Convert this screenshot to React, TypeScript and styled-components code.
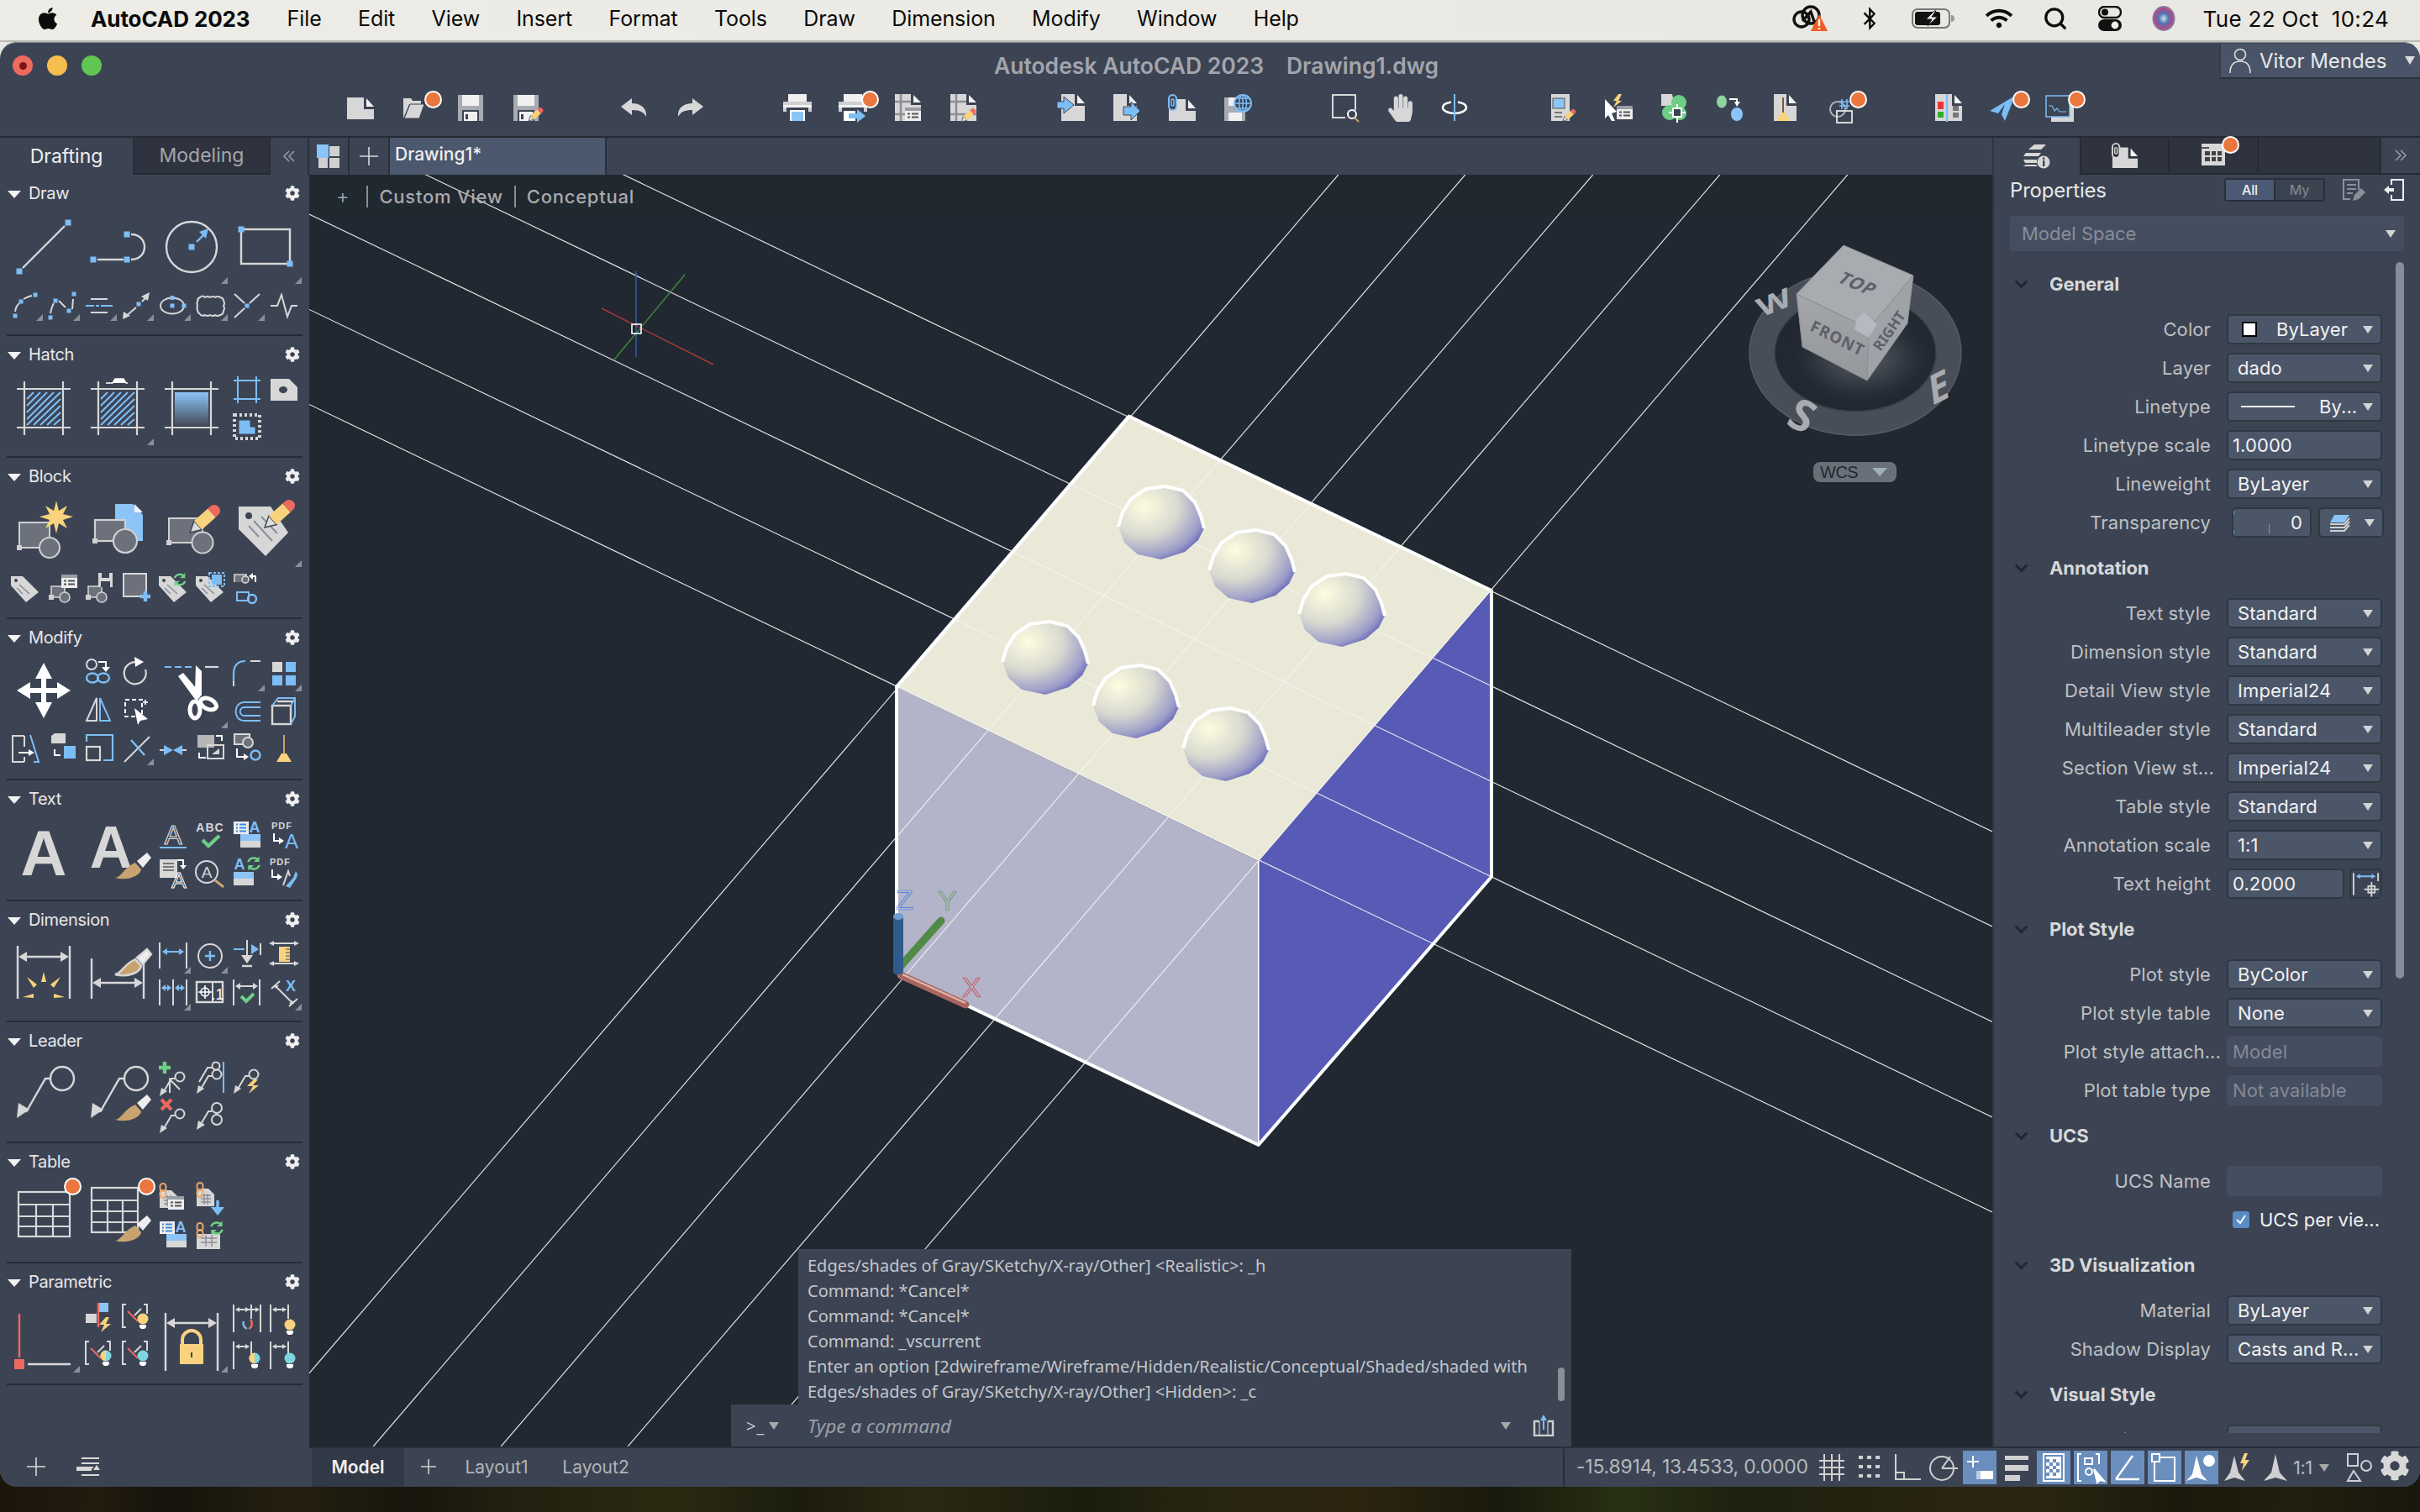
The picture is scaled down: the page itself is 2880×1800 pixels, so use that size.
import React from 'react';
import styled, { createGlobalStyle } from 'styled-components';
import { FaApple, FaBluetoothB, FaCog, FaHandPaper, FaWifi } from 'react-icons/fa';
import { FiSearch } from 'react-icons/fi';

const G = '#d7d7d7', B = '#7dbdf5', Y = '#f9d27d', R = '#ee6a60', N = '#6fce86', K = '#3c4454', T = '#c9a36f', M = '#6c717c', C = '#7fd6e0';
const FONT = `Inter, "Noto Sans", "Liberation Sans", sans-serif`;

const Global = createGlobalStyle`
  html, body { margin: 0; padding: 0; width: 2880px; height: 1800px; overflow: hidden; background: #1b1610; }
  #root { width: 2880px; height: 1800px; }
  * { box-sizing: border-box; }
`;

/* ---------- icon fragments ---------- */
const sq = (x: number, y: number, c = B, s = 6) => <rect x={x - s / 2} y={y - s / 2} width={s} height={s} fill={c} />;
const pencil = (x: number, y: number, s = 1) => (
  <g transform={`translate(${x} ${y}) rotate(-42) scale(${s})`}>
    <path d="M0 0L13-7V7Z" fill="#ddd" stroke={K} strokeWidth="1.5" />
    <rect x="13" y="-7" width="22" height="14" fill={Y} />
    <path d="M35-7h4a7 7 0 0 1 0 14h-4Z" fill={R} />
  </g>
);
const brush = (x: number, y: number, s = 1) => (
  <g transform={`translate(${x} ${y}) scale(${s})`}>
    <path d="M0 0C8-1 10-12 24-18L31-10C30-2 14 4 0 0Z" fill={T} />
    <path d="M26-20L38-30L43-24L33-12Z" fill="#eee" />
  </g>
);
const block = (x: number, y: number, w: number, h: number, r: number, sw = 2) => (
  <g>
    <rect x={x} y={y} width={w} height={h} fill={M} stroke="#d0d0d0" strokeWidth={sw} />
    <circle cx={x + w} cy={y + h} r={r} fill={M} stroke="#d0d0d0" strokeWidth={sw} />
    <rect x={x - 3} y={y + h - 3} width={6} height={6} fill="#d0d0d0" />
  </g>
);
const tag = (
  <g>
    <path d="M5 9L19 9L38 28L23 40L5 20Z" fill={G} />
    <circle cx="11" cy="14" r="2" fill={K} />
    <path d="M15 19L27 30M12 23L19 30" stroke="#8a8f98" strokeWidth="1.6" />
  </g>
);
const sync = (x: number, y: number, s = 1) => (
  <g transform={`translate(${x} ${y}) scale(${s})`} fill="none" stroke={N} strokeWidth="2.6">
    <path d="M-7-2A7.5 7.5 0 0 1 6-4" />
    <path d="M7 2A7.5 7.5 0 0 1-6 4" />
    <path d="M7-9V-2H0" fill={N} stroke="none" />
    <path d="M-7 9V2H0" fill={N} stroke="none" />
  </g>
);
const chain = (x: number, y: number) => (
  <g transform={`translate(${x} ${y})`} fill="none" stroke="#eda66b" strokeWidth="2">
    <rect x="-3.5" y="-9" width="7" height="9" rx="3.5" />
    <rect x="-3.5" y="-1" width="7" height="9" rx="3.5" />
  </g>
);
const tableMini = (x: number, y: number) => (
  <g>
    <path d={`M${x} ${y}h14l7 7v14H${x}Z`} fill={G} />
    <path d={`M${x + 5} ${y + 8}h12M${x + 5} ${y + 12}h12M${x + 5} ${y + 16}h12M${x + 9} ${y + 6}v13M${x + 13} ${y + 6}v13`} stroke="#8a8f98" strokeWidth="1.4" />
  </g>
);
const listDoc = (x: number, y: number) => (
  <g>
    <rect x={x} y={y} width="19" height="16" fill="#eee" />
    <rect x={x} y={y} width="19" height="4" fill="#9a9da3" />
    <path d={`M${x + 3} ${y + 7.5}h3M${x + 8} ${y + 7.5}h8M${x + 3} ${y + 11.5}h3M${x + 8} ${y + 11.5}h8`} stroke="#555" strokeWidth="1.8" />
  </g>
);
const listA = (
  <g>
    <rect x="6" y="5" width="18" height="15" fill="#eee" />
    <path d="M9 8.5h2M13 8.5h8M9 12.5h2M13 12.5h8M9 16.5h2M13 16.5h8" stroke="#3a8be0" strokeWidth="2" />
    <rect x="14" y="20" width="24" height="8" fill="#8cc4f7" />
    <rect x="14" y="28" width="24" height="8" fill={G} />
    <text x="31" y="18" fontFamily="Liberation Sans" fontWeight="700" fontSize="18" textAnchor="middle" fill={B}>A</text>
  </g>
);
const bulb = (x: number, y: number, c: string, half = false) => (
  <g>
    <circle cx={x} cy={y} r="6.5" fill={half ? C : c} />
    {half && <path d={`M${x} ${y - 6.5}A6.5 6.5 0 0 0 ${x} ${y + 6.5}Z`} fill={Y} />}
    <path d={`M${x - 4} ${y + 7}h8v3l-2 2h-4l-2-2Z`} fill="#fff" />
  </g>
);
const conBracket = (
  <g fill="none" stroke={G} strokeWidth="2">
    <path d="M10 5H6V32H10" />
    <path d="M31 5H35V16" />
    <path d="M20 18L28 10" />
    <path d="M12 13L24 25" stroke={R} />
  </g>
);
const dimTop = (
  <g fill="none" stroke={G} strokeWidth="2">
    <path d="M6 5V38M27 5V22" />
    <path d="M9 11H24" />
    <path d="M8 11l5-3v6ZM25 11l-5-3v6Z" fill={G} stroke="none" />
  </g>
);
const gridHatch = (extra?: React.ReactNode) => (
  <g>
    <path d="M12 19H76M12 65H76M21 10V74M67 10V74" stroke={G} strokeWidth="2.2" fill="none" />
    {extra}
  </g>
);
const hatchFill = (
  <g stroke={B} strokeWidth="2.2">
    {[0, 8, 16, 24, 32, 40, 48, 56, 64, 72].map((o) => (
      <line key={o} x1={Math.max(24, 24 + o - 40)} y1={Math.min(62, 23 + o)} x2={Math.min(64, 24 + o)} y2={Math.max(23, 23 + o - 40)} />
    ))}
  </g>
);
const leaderBase = (
  <g fill="none" stroke={G} strokeWidth="2.4">
    <circle cx="66" cy="23" r="14" />
    <path d="M52 23H46L23 63" />
    <path d="M12 70L14 52L27 60Z" fill={G} stroke="none" />
  </g>
);
const minLeader = (y = 0) => (
  <g fill="none" stroke={G} strokeWidth="2" transform={`translate(0 ${y})`}>
    <path d="M10 37L20 20H24" />
    <path d="M6 41L8 31L15 35Z" fill={G} stroke="none" />
    <circle cx="30" cy="18" r="5.5" />
  </g>
);

const panelIcons: Record<string, React.ReactNode> = {
  line: <g><path d="M19 67L69 17" stroke={G} strokeWidth="2.4" />{sq(15, 71, B, 7)}{sq(73, 13, B, 7)}</g>,
  pline: <g fill="none"><path d="M20 57H51" stroke={G} strokeWidth="2.4" /><path d="M60 27C72 27 76 36 76 42S72 57 60 57" stroke={G} strokeWidth="2.4" />{sq(15, 57, B, 7)}{sq(55, 57, B, 7)}{sq(55, 27, B, 7)}</g>,
  circle: <g><circle cx="44" cy="42" r="30" fill="none" stroke={G} strokeWidth="2.4" />{sq(44, 42, B, 7)}<path d="M50 36L60 26" stroke={B} strokeWidth="2.4" /><path d="M64 20L61 32L53 24Z" fill={B} /></g>,
  rect: <g><rect x="15" y="21" width="58" height="41" fill="none" stroke={G} strokeWidth="2.4" />{sq(15, 21, B, 7)}{sq(73, 62, B, 7)}</g>,
  arc: <g><path d="M10 31Q11 24 15 21M20 16Q25 13 30 12" fill="none" stroke={G} strokeWidth="2" />{sq(10, 36, B, 5)}{sq(17, 19, B, 5)}{sq(34, 11, B, 5)}</g>,
  spline: <g><path d="M8 33Q10 24 12 21M18 18L26 26M34 28L35 16" fill="none" stroke={G} strokeWidth="2" />{sq(8, 38, B, 5)}{sq(14, 18, B, 5)}{sq(30, 30, B, 5)}{sq(36, 10, B, 5)}</g>,
  mline: <g><path d="M12 16H32M12 32H32" stroke={G} strokeWidth="2" /><path d="M6 24H38" stroke={B} strokeWidth="2" strokeDasharray="10 2 4 2 20 0" /></g>,
  xline2: <g><path d="M8 38L22 26M29 19L36 12" stroke={G} strokeWidth="2" />{sq(25, 22, B, 5)}<path d="M6 40L7 31L15 36Z" fill={G} /><path d="M38 8L36 18L28 13Z" fill={G} /></g>,
  ellipse: <g><ellipse cx="21" cy="24" rx="14" ry="9.5" fill="none" stroke={G} strokeWidth="2" />{sq(21, 24, B, 5)}{sq(21, 14.5, B, 5)}{sq(35, 24, B, 5)}</g>,
  cloud: <path d="M10 14q3-3 6 0q3-2 6 0q3-2 6 0q3-2 6 0q4 1 4 4q2 3 0 6q2 3 0 6q0 4-4 5q-3 2-6 0q-3 2-6 0q-3 2-6 0q-4 2-6-1q-3-2-3-5q-1-3 0-5q-1-3 0-5q0-4 3-5Z" fill="none" stroke={G} strokeWidth="2" />,
  xline: <g><path d="M7 10L19 21M37 10L25 21M7 38L19 27" stroke={G} strokeWidth="2" />{sq(22, 24, B, 5)}</g>,
  wave: <path d="M6 24H14L19 11L26 37L31 24H38" fill="none" stroke={G} strokeWidth="2" />,
  hatch: gridHatch(hatchFill),
  hatch2: gridHatch(<g>{hatchFill}<path d="M20 9H28L31 4H41L44 9H46" transform="translate(10 3)" fill="#fff" stroke="#fff" strokeWidth="1.5" /></g>),
  gradient: <g><defs><linearGradient id="hg" x1="0" y1="0" x2="0" y2="1"><stop offset="0" stopColor="#8cc4f7" /><stop offset="1" stopColor="#474f5d" /></linearGradient></defs>{gridHatch(<rect x="24" y="23" width="40" height="39" fill="url(#hg)" />)}</g>,
  crop: <path d="M6 9H38M6 31H38M11 4V36M33 4V36" stroke={B} strokeWidth="2" fill="none" />,
  hole: <g><path d="M6 7H28L38 17V33H6Z" fill={G} /><ellipse cx="21" cy="20" rx="5" ry="4" fill={K} /></g>,
  boundary: <g><rect x="7" y="6" width="30" height="28" fill="none" stroke={G} strokeWidth="4" strokeDasharray="3 3" /><path d="M12 12H26V20H32V29H12Z" fill={B} stroke={K} strokeWidth="1" /></g>,
  blkNew: <g>{block(15, 33, 36, 30, 12)}<path d="M59 7L62 19L72 13L67 23L79 26L67 30L72 40L62 34L59 46L56 34L46 40L51 30L39 26L51 23L46 13L56 19Z" fill={Y} /></g>,
  blkDoc: <g><path d="M41 11H62L74 24V55H41Z" fill="#8cc4f7" /><path d="M64 11L74 21H64Z" fill="#eef" />{block(17, 30, 36, 25, 14, 2.2)}</g>,
  blkEdit: <g>{block(17, 28, 40, 29, 12.5)}{pencil(42, 45)}</g>,
  attEdit: <g><path d="M12 14H50L71 45L44 73L12 41Z" fill={G} /><circle cx="24" cy="25" r="4" fill={K} /><path d="M30 31L52 55M24 37L36 50M39 26L58 46" stroke="#8a8f98" strokeWidth="2" />{pencil(43, 39)}</g>,
  tag: tag,
  blkList: <g>{block(9, 21, 16, 13, 6, 1.6)}{listDoc(21, 7)}</g>,
  blkSave: <g>{block(9, 21, 16, 13, 6, 1.6)}<rect x="21" y="5" width="17" height="17" fill={G} /><rect x="25" y="5" width="9" height="6" fill={K} /><rect x="24" y="15" width="11" height="7" fill={K} /></g>,
  blkPlus: <g><rect x="7" y="6" width="27" height="27" fill={M} stroke={G} strokeWidth="2" /><path d="M33 27V39M27 33H39" stroke={B} strokeWidth="4.4" /></g>,
  tagSync: <g>{tag}{sync(30, 13, .9)}</g>,
  tagBlue: <g>{tag}<rect x="24" y="7" width="12" height="12" fill={B} /><rect x="21" y="5" width="18" height="16" fill="none" stroke={B} strokeWidth="2" strokeDasharray="3 2" /></g>,
  blkSwap: <g><path d="M7 16V7H21V16" fill={M} stroke={G} strokeWidth="1.6" /><circle cx="20" cy="13" r="4" fill={M} stroke={G} strokeWidth="1.6" /><path d="M32 16V9H27" fill="none" stroke="#fff" strokeWidth="2" /><path d="M29 5V13L24 9Z" fill="#fff" /><rect x="10" y="28" width="14" height="10" fill={K} stroke={B} strokeWidth="2" /><circle cx="28" cy="36" r="5" fill="none" stroke={B} strokeWidth="2.4" /></g>,
  move: <path d="M44 8L54 27H47V38H60V31L76 41L60 51V44H47V55H54L44 74L34 55H41V44H28V51L12 41L28 31V38H41V27H34Z" fill="#fff" />,
  copy: <g><circle cx="13" cy="10" r="6" fill="none" stroke={G} strokeWidth="2" /><path d="M21 7H30V14" fill="none" stroke="#fff" strokeWidth="2" /><path d="M25 13H35L30 19Z" fill="#fff" /><ellipse cx="14" cy="26" rx="7" ry="5.5" fill="none" stroke={B} strokeWidth="2.4" /><ellipse cx="27" cy="26" rx="7" ry="5.5" fill="none" stroke={B} strokeWidth="2.4" /></g>,
  rotate: <g><path d="M25 8A13 13 0 1 0 33 16" fill="none" stroke={G} strokeWidth="2.2" /><path d="M20 1L31 7L21 13Z" fill="#fff" /></g>,
  mirror: <g><path d="M19 6L7 33H19Z" fill="none" stroke={G} strokeWidth="2" /><path d="M23 6L35 33H23Z" fill="none" stroke={B} strokeWidth="2" /></g>,
  stretchSel: <g><rect x="9" y="8" width="20" height="20" fill="none" stroke="#fff" strokeWidth="2" strokeDasharray="5 3" /><path d="M20 18L36 31L27 33L24 38Z" fill="#fff" /><path d="M33 8V14M30 11H36" stroke="#fff" strokeWidth="1.6" /></g>,
  scissors: <g><path d="M12 13H46" stroke={B} strokeWidth="2.2" strokeDasharray="8 4" /><path d="M60 13H76" stroke={G} strokeWidth="2.2" /><path d="M28 24L34 20L56 46L50 54Z" fill="#fff" /><path d="M49 11L56 18L56 47L48 42Z" fill="#fff" /><ellipse cx="48" cy="64" rx="6" ry="10" fill="none" stroke="#fff" strokeWidth="5" /><ellipse cx="64" cy="57" rx="10" ry="6" transform="rotate(25 64 57)" fill="none" stroke="#fff" strokeWidth="5" /></g>,
  fillet: <g><path d="M6 32V22Q6 6 20 6" fill="none" stroke={B} strokeWidth="2.2" /><path d="M26 6H38" stroke={G} strokeWidth="2" /><path d="M6 36V30" stroke={G} strokeWidth="2" /></g>,
  array: <g><rect x="8" y="7" width="12" height="12" fill={G} /><rect x="24" y="7" width="12" height="12" fill={B} /><rect x="8" y="23" width="12" height="12" fill={B} /><rect x="24" y="23" width="12" height="12" fill={B} /></g>,
  offset: <g fill="none" stroke={B} strokeWidth="2"><path d="M38 11H19C5 11 5 33 19 33H38" /><path d="M38 17H19C12 17 12 27 19 27H38" /></g>,
  box3d: <g><rect x="8" y="15" width="22" height="22" fill="none" stroke={G} strokeWidth="2.4" /><path d="M8 15L15 6H35V28L30 37M30 15L35 6" fill="none" stroke={B} strokeWidth="2" /><path d="M14 10H32" stroke={G} strokeWidth="2.4" /></g>,
  stretch: <g><path d="M21 7H7V38H21" fill="none" stroke={G} strokeWidth="2" /><path d="M21 7V20M21 32V38" stroke={G} strokeWidth="2" /><path d="M28 6L38 38H32" fill="none" stroke={B} strokeWidth="2" /><path d="M14 27H28" stroke="#fff" strokeWidth="2" /><path d="M33 27L26 23V31Z" fill="#fff" /></g>,
  scale3: <g><path d="M9 7L13 4H26V16H9Z" fill={G} /><path d="M13 23V30H20" stroke="#fff" strokeWidth="2" fill="none" /><rect x="24" y="19" width="14" height="15" fill={B} /></g>,
  scale: <g><rect x="7" y="20" width="16" height="16" fill="none" stroke={G} strokeWidth="2.2" /><path d="M7 14V6H38V36H27" fill="none" stroke={B} strokeWidth="2.2" /></g>,
  trim: <g><path d="M8 38L38 8" stroke={G} strokeWidth="2" /><path d="M16 12L32 30" stroke={B} strokeWidth="2.4" /></g>,
  join: <g><path d="M6 24H14M30 24H38" stroke={G} strokeWidth="2" /><path d="M22 24L11 18V30ZM22 24L33 18V30Z" fill={B} /></g>,
  copyMode: <g><rect x="7" y="6" width="20" height="15" fill="#b7b7b7" /><path d="M29 7H36V13" fill="none" stroke="#fff" strokeWidth="2" /><rect x="19" y="18" width="19" height="16" fill="none" stroke={G} strokeWidth="2" /><path d="M24 29L33 29L33 22Z" fill={G} /><path d="M17 33H9V27" fill="none" stroke="#fff" strokeWidth="2" /></g>,
  swapBlk: <g><rect x="7" y="5" width="18" height="12" fill={M} stroke={G} strokeWidth="2" /><circle cx="23" cy="15" r="6" fill={M} stroke={G} strokeWidth="2" /><path d="M10 22V32H20" fill="none" stroke="#fff" strokeWidth="2" /><path d="M24 32L18 28V36Z" fill="#fff" /><circle cx="32" cy="30" r="5.5" fill="none" stroke={B} strokeWidth="2.4" /></g>,
  purge: <g><rect x="21" y="6" width="2" height="24" fill={T} /><path d="M13 38L19 28H25L31 38Z" fill={Y} /></g>,
  A: <text x="44" y="69" fontFamily="Liberation Sans" fontWeight="700" fontSize="76" textAnchor="middle" fill={G}>A</text>,
  Abrush: <g><text x="36" y="60" fontFamily="Liberation Sans" fontWeight="700" fontSize="70" textAnchor="middle" fill={G}>A</text>{brush(41, 72)}</g>,
  Aline: <g><text x="22" y="32" fontFamily="Liberation Sans" fontSize="31" textAnchor="middle" fill="none" stroke={G} strokeWidth="1.2">A</text><path d="M6 36H38" stroke={B} strokeWidth="2" /></g>,
  abc: <g><text x="22" y="17" fontFamily="Liberation Sans" fontWeight="700" fontSize="14" letterSpacing="1" textAnchor="middle" fill={G}>ABC</text><path d="M13 27L20 34L33 22" fill="none" stroke={N} strokeWidth="4.2" /></g>,
  listA: listA,
  pdfA: <g><text x="7" y="14" fontFamily="Liberation Sans" fontWeight="700" fontSize="11" letterSpacing="1" fill={G}>PDF</text><path d="M10 19V28H18" stroke="#fff" strokeWidth="2" fill="none" /><path d="M22 28L16 24V32Z" fill="#fff" /><text x="31" y="37" fontFamily="Liberation Sans" fontSize="24" textAnchor="middle" fill={B}>A</text></g>,
  docA: <g><rect x="6" y="6" width="21" height="22" fill={G} /><path d="M10 11H23M10 15H23M10 19H23" stroke="#777" strokeWidth="1.8" /><path d="M27 7H34V15" fill="none" stroke="#fff" strokeWidth="2" /><path d="M30 13H38L34 18Z" fill="#fff" /><text x="29" y="40" fontFamily="Liberation Sans" fontSize="26" textAnchor="middle" fill="none" stroke="#fff" strokeWidth="1">A</text></g>,
  findA: <g><circle cx="18" cy="21" r="13" fill="none" stroke={G} strokeWidth="2" /><text x="18" y="28" fontFamily="Liberation Sans" fontSize="19" textAnchor="middle" fill={G}>A</text><path d="M28 31L38 39" stroke={T} strokeWidth="3" /></g>,
  Async: <g><text x="13" y="18" fontFamily="Liberation Sans" fontWeight="700" fontSize="18" textAnchor="middle" fill={B}>A</text>{sync(30, 11, .95)}<rect x="6" y="21" width="24" height="8" fill="#8cc4f7" /><rect x="6" y="29" width="24" height="8" fill={G} /></g>,
  pdfW: <g><text x="5" y="13" fontFamily="Liberation Sans" fontWeight="700" fontSize="11" letterSpacing="1" fill={G}>PDF</text><path d="M8 18V27H16" stroke="#fff" strokeWidth="2" fill="none" /><path d="M20 27L14 23V31Z" fill="#fff" /><path d="M21 37L27 20L29 26" fill="none" stroke={G} strokeWidth="2" /><path d="M24 38L33 28L36 20L38 24L37 28L29 40Z" fill={B} /></g>,
  dimSmart: <g fill="none" stroke={G} strokeWidth="2.4"><path d="M13 9V72M75 9V72" /><path d="M18 22H70" /><path d="M14 22L24 16V28ZM74 22L64 16V28Z" fill={G} stroke="none" /><g fill={Y} stroke="none"><path d="M44 40L47 52H41Z" /><path d="M24 46L36 55L32 59Z" /><path d="M64 46L52 55L56 59Z" /><path d="M19 70L32 66V71Z" /><path d="M69 70L56 66V71Z" /></g></g>,
  dimBrush: <g fill="none" stroke={G} strokeWidth="2.4"><path d="M13 24V72M75 24V72" /><path d="M18 53H70" /><path d="M14 53L24 47V59ZM74 53L64 47V59Z" fill={G} stroke="none" />{brush(41, 43)}</g>,
  dimL: <g><path d="M6 5V36M38 5V36" stroke={G} strokeWidth="2" /><path d="M10 16H34" stroke={B} strokeWidth="2" /><path d="M9 16L15 12V20ZM35 16L29 12V20Z" fill={B} /></g>,
  dimC: <g><circle cx="22" cy="21" r="14" fill="none" stroke={G} strokeWidth="2" /><path d="M22 15V27M16 21H28" stroke={B} strokeWidth="2.4" /></g>,
  dimB: <g><path d="M6 13H19" stroke={B} strokeWidth="2" /><path d="M22 2V26" stroke={G} strokeWidth="2" /><path d="M38 6V20" stroke={G} strokeWidth="2" /><path d="M27 13H32" stroke={B} strokeWidth="2" /><path d="M36 13L27 7V19Z" fill={B} /><path d="M22 30L15 20H29Z" fill={G} /><path d="M16 33H28" stroke={G} strokeWidth="2.4" /></g>,
  ruler: <g><path d="M7 6H37M7 30H37" stroke={G} strokeWidth="2" /><path d="M4 6L10 3V9ZM40 6L34 3V9ZM4 30L10 27V33ZM40 30L34 27V33Z" fill={G} /><rect x="16" y="10" width="13" height="18" fill={Y} /><path d="M24 13H29M24 17H29M24 21H29M24 25H29" stroke={K} strokeWidth="1.2" /></g>,
  dimCont: <g><path d="M6 5V36M22 5V36M38 5V36" stroke={G} strokeWidth="2" /><path d="M10 15H18M26 15H34" stroke={B} strokeWidth="2" /><path d="M8 15L13 11V19ZM20 15L15 11V19ZM24 15L29 11V19ZM36 15L31 11V19Z" fill={B} /></g>,
  tol: <g><rect x="6" y="8" width="31" height="24" fill="none" stroke={G} strokeWidth="2.4" /><path d="M25 8V32" stroke={G} strokeWidth="2" /><circle cx="16" cy="20" r="5" fill="none" stroke="#fff" strokeWidth="1.6" /><path d="M16 12V28M8 20H24" stroke="#fff" strokeWidth="1.6" /><text x="31" y="29" fontFamily="Liberation Sans" fontSize="18" textAnchor="middle" fill="#fff">.1</text></g>,
  dimOk: <g><path d="M6 5V36M37 5V36" stroke={G} strokeWidth="2" /><path d="M10 13H33" stroke={G} strokeWidth="2" /><path d="M8 13L14 9V17ZM35 13L29 9V17Z" fill={G} /><path d="M15 25L21 31L30 22" fill="none" stroke={N} strokeWidth="4" /></g>,
  dimX: <g><path d="M7 16L17 7M28 37L38 28M12 13L32 33" stroke={G} strokeWidth="2" /><path d="M10 12h6l-4 4ZM34 34l-6 0 4-4Z" fill={G} /><text x="30" y="19" fontFamily="Liberation Sans" fontWeight="700" fontSize="18" textAnchor="middle" fill={B}>X</text></g>,
  leader: leaderBase,
  leaderBrush: <g>{leaderBase}{brush(41, 72)}</g>,
  ldAdd: <g>{minLeader(3)}<path d="M8 3V17M1 10H15" stroke={N} strokeWidth="4.4" transform="translate(4 0)" /><path d="M18 40V24L30 36" fill="none" stroke={G} strokeWidth="2" /></g>,
  ldAlign: <g>{minLeader(0)}<path d="M9 27L19 10H24" fill="none" stroke={G} strokeWidth="2" /><circle cx="29" cy="8" r="4.5" fill="none" stroke={G} strokeWidth="2" /><path d="M38 3V40" stroke={B} strokeWidth="2" /></g>,
  ldBolt: <g>{minLeader(0)}<path d="M30 24L22 32H29L24 41L36 31H29L35 24Z" fill={Y} /></g>,
  ldRem: <g><path d="M8 4L20 16M20 4L8 16" stroke={R} strokeWidth="4" />{minLeader(3)}</g>,
  ldCol: <g><path d="M10 35L20 18H24" fill="none" stroke={G} strokeWidth="2" /><path d="M6 40L8 29L16 34Z" fill={G} /><circle cx="30" cy="14" r="6" fill="none" stroke={G} strokeWidth="2" /><circle cx="30" cy="28" r="6" fill="none" stroke={G} strokeWidth="2" /></g>,
  table: <g fill="none" stroke={G} strokeWidth="2.2"><rect x="14" y="14" width="61" height="53" /><path d="M14 29H75M14 43H75M14 55H75M35 29V67M55 29V67" /></g>,
  tableBrush: <g><g fill="none" stroke={G} strokeWidth="2.2"><rect x="13" y="9" width="55" height="53" /><path d="M13 24H68M13 37H68M13 50H68M32 24V62M50 24V62" /></g>{brush(41, 72)}</g>,
  tblLink: <g>{tableMini(6, 12)}{chain(10, 13)}{listDoc(16, 19)}</g>,
  tblDown: <g>{tableMini(6, 10)}{chain(10, 12)}<path d="M31 24V34" stroke={B} strokeWidth="3.4" /><path d="M23 32H39L31 42Z" fill={B} /></g>,
  tblSync: <g><path d="M6 20H34V38H6Z" fill={G} /><path d="M11 25H30M11 30H30M17 21V35M24 21V35" stroke="#8a8f98" strokeWidth="1.4" />{chain(10, 16)}{sync(30, 13, .95)}</g>,
  conCorner: <g><path d="M15 16V68" stroke={R} strokeWidth="2.4" /><rect x="9" y="70" width="12" height="12" fill={R} /><path d="M25 76H76" stroke={G} strokeWidth="2.4" /></g>,
  conFlag: <g><rect x="22" y="3" width="11" height="11" fill="#8cc4f7" /><path d="M21 3V32" stroke={R} strokeWidth="2.4" /><rect x="6" y="16" width="13" height="11" fill={G} /><path d="M30 20L22 29H28L24 38L36 28H30L34 20Z" fill={Y} /></g>,
  conY: <g>{conBracket}{bulb(30, 22, Y)}</g>,
  conH: <g>{conBracket}{bulb(30, 22, C, true)}</g>,
  conC: <g>{conBracket}{bulb(30, 22, C)}</g>,
  lock: <g fill="none" stroke={G} strokeWidth="2.4"><path d="M13 15V84M75 15V84" /><path d="M18 27H70" /><path d="M14 27L24 21V33ZM74 27L64 21V33Z" fill={G} stroke="none" /><path d="M33 52V47A11 11 0 0 1 55 47V52" stroke={Y} strokeWidth="4" /><rect x="30" y="52" width="28" height="24" rx="1" fill={Y} stroke="none" /><rect x="43" y="62" width="2" height="6" fill={K} stroke="none" /></g>,
  dimSync: <g>{dimTop}<path d="M38 5V38" stroke={G} strokeWidth="2" /><path d="M20 11H35" stroke={G} strokeWidth="2" /><path d="M37 11l-5-3v6Z" fill={G} /><path d="M18 25A7 7 0 0 0 22 34" fill="none" stroke={B} strokeWidth="2.4" /><path d="M26 23A7 7 0 0 1 24 34" fill="none" stroke={R} strokeWidth="2.4" /></g>,
  dimY: <g>{dimTop}{bulb(29, 29, Y)}</g>,
  dimH: <g>{dimTop}{bulb(31, 25, C, true)}</g>,
  dimCy: <g>{dimTop}{bulb(29, 25, C)}</g>,
};

type Tool = { i: string; c: number; r: number; big?: boolean; fly?: boolean; badge?: boolean };
const t = (i: string, c: number, r: number, fly = false): Tool => ({ i, c, r, fly });
const b = (i: string, c: number, r: number, fly = false, badge = false): Tool => ({ i, c, r, big: true, fly, badge });

const sections: { title: string; pad: number; tools: Tool[] }[] = [
  { title: 'Draw', pad: 14, tools: [b('line', 0, 0), b('pline', 2, 0), b('circle', 4, 0, true), b('rect', 6, 0, true),
    t('arc', 0, 2, true), t('spline', 1, 2, true), t('mline', 2, 2, true), t('xline2', 3, 2, true), t('ellipse', 4, 2, true), t('cloud', 5, 2, true), t('xline', 6, 2, true), t('wave', 7, 2)] },
  { title: 'Hatch', pad: 11, tools: [b('hatch', 0, 0), b('hatch2', 2, 0, true), b('gradient', 4, 0), t('crop', 6, 0), t('hole', 7, 0), t('boundary', 6, 1)] },
  { title: 'Block', pad: 14, tools: [b('blkNew', 0, 0), b('blkDoc', 2, 0), b('blkEdit', 4, 0), b('attEdit', 6, 0, true),
    t('tag', 0, 2), t('blkList', 1, 2), t('blkSave', 2, 2), t('blkPlus', 3, 2), t('tagSync', 4, 2), t('tagBlue', 5, 2), t('blkSwap', 6, 2)] },
  { title: 'Modify', pad: 14, tools: [b('move', 0, 0), t('copy', 2, 0), t('rotate', 3, 0), b('scissors', 4, 0, true), t('fillet', 6, 0, true), t('array', 7, 0, true), t('mirror', 2, 1), t('stretchSel', 3, 1), t('offset', 6, 1), t('box3d', 7, 1),
    t('stretch', 0, 2), t('scale3', 1, 2), t('scale', 2, 2), t('trim', 3, 2, true), t('join', 4, 2), t('copyMode', 5, 2), t('swapBlk', 6, 2), t('purge', 7, 2)] },
  { title: 'Text', pad: 10, tools: [b('A', 0, 0), b('Abrush', 2, 0), t('Aline', 4, 0), t('abc', 5, 0), t('listA', 6, 0), t('pdfA', 7, 0), t('docA', 4, 1), t('findA', 5, 1), t('Async', 6, 1), t('pdfW', 7, 1)] },
  { title: 'Dimension', pad: 10, tools: [b('dimSmart', 0, 0), b('dimBrush', 2, 0), t('dimL', 4, 0, true), t('dimC', 5, 0, true), t('dimB', 6, 0), t('ruler', 7, 0), t('dimCont', 4, 1, true), t('tol', 5, 1), t('dimOk', 6, 1), t('dimX', 7, 1, true)] },
  { title: 'Leader', pad: 10, tools: [b('leader', 0, 0), b('leaderBrush', 2, 0), t('ldAdd', 4, 0), t('ldAlign', 5, 0), t('ldBolt', 6, 0), t('ldRem', 4, 1), t('ldCol', 5, 1)] },
  { title: 'Table', pad: 9, tools: [b('table', 0, 0, false, true), b('tableBrush', 2, 0, false, true), t('tblLink', 4, 0), t('tblDown', 5, 0), t('listA', 4, 1), t('tblSync', 5, 1)] },
  { title: 'Parametric', pad: 11, tools: [b('conCorner', 0, 0, true), t('conFlag', 2, 0), t('conY', 3, 0), t('conH', 2, 1), t('conC', 3, 1), b('lock', 4, 0, true), t('dimSync', 6, 0), t('dimY', 7, 0), t('dimH', 6, 1), t('dimCy', 7, 1)] },
];

/* toolbar (34 x 32) */
const doc = (x: number, y: number, w: number, h: number) => (
  <g>
    <path d={`M${x} ${y}H${x + w - 12}V${y + 14}H${x + w}V${y + h}H${x}Z`} fill={G} />
    <path d={`M${x + w - 9} ${y + 1}L${x + w} ${y + 11}H${x + w - 9}Z`} fill="#f2f2f2" />
  </g>
);
const floppy = (
  <g>
    <path d="M1 1H31V32H1Z" fill="#a8abb1" />
    <rect x="6" y="1" width="20" height="13" fill="#f0f0f0" />
    <rect x="6" y="19" width="20" height="13" fill={K} />
    <rect x="8" y="21" width="16" height="11" fill="#f0f0f0" />
    <rect x="10" y="24" width="3" height="6" fill={K} />
  </g>
);
const printer = (
  <g>
    <rect x="6" y="0" width="22" height="10" fill="#f0f0f0" />
    <rect x="0" y="9" width="34" height="12" fill="#d0d0d0" />
    <rect x="0" y="13" width="34" height="3" fill="#f4f4f4" />
    <rect x="4" y="16" width="26" height="14" fill={K} />
  </g>
);
const sheet = (
  <g>
    <path d="M1 0H20V13H32V32H1Z" fill={G} />
    <path d="M23 1L32 10H23Z" fill="#f2f2f2" />
    <path d="M8 0V32M1 9H20M1 24H32" stroke="#8b8e95" strokeWidth="2.5" />
  </g>
);
const toolbar: { i: string; badge?: boolean; node: React.ReactNode }[][] = [
  [
    { i: 'new', node: doc(1, 4, 32, 26) },
    { i: 'open', badge: true, node: <g><path d="M2 5H11L13 8H23V12H9L2 29Z" fill={G} /><path d="M10 12H27L21 29H3Z" fill={G} stroke={K} strokeWidth="1" /></g> },
    { i: 'save', node: floppy },
    { i: 'saveas', node: <g>{floppy}{pencil(19, 32, .48)}</g> },
  ],
  [
    { i: 'undo', node: <path d="M1 15L14 5V11C24 11 32 16 31 27C28 21 23 19 14 19V25Z" fill={G} /> },
    { i: 'redo', node: <path d="M33 15L20 5V11C10 11 2 16 3 27C6 21 11 19 20 19V25Z" fill={G} /> },
  ],
  [
    { i: 'print', node: <g>{printer}<rect x="8" y="19" width="18" height="13" fill="#fff" /><rect x="10" y="21" width="14" height="11" fill="#8cc4f7" /></g> },
    { i: 'plot', badge: true, node: <g>{printer}<rect x="6" y="20" width="14" height="12" fill="#fff" /><path d="M12 23H22V18L32 26L22 34V29H12Z" fill={B} /></g> },
    { i: 'sheet', node: <g>{sheet}{listDoc(13, 16)}</g> },
    { i: 'sheetEdit', node: <g>{sheet}{pencil(14, 33, .48)}</g> },
  ],
  [
    { i: 'import', node: <g>{doc(5, 0, 28, 32)}<path d="M0 9H8V3L20 13L8 23V17H0Z" fill={B} stroke={K} strokeWidth="1" /></g> },
    { i: 'export', node: <g>{doc(1, 0, 28, 32)}<path d="M13 15H22V9L33 20L22 31V25H13Z" fill={B} stroke={K} strokeWidth="1" /></g> },
    { i: 'attach', node: <g>{doc(1, 6, 32, 26)}<rect x="1" y="1" width="9" height="18" rx="4.5" fill="#3c4454" stroke={B} strokeWidth="2" /><rect x="4" y="6" width="3" height="8" rx="1.5" fill="none" stroke={B} strokeWidth="1.5" /></g> },
    { i: 'web', node: <g><path d="M1 4H26V32H1Z" fill="#a8abb1" /><rect x="6" y="4" width="13" height="10" fill="#f0f0f0" /><rect x="6" y="22" width="16" height="10" fill="#f0f0f0" /><circle cx="23" cy="11" r="10" fill={K} stroke={B} strokeWidth="2" /><path d="M13 11H33M23 1V21M16 5H30M16 17H30" stroke={B} strokeWidth="1.5" /><ellipse cx="23" cy="11" rx="4.5" ry="10" fill="none" stroke={B} strokeWidth="1.5" /></g> },
  ],
  [
    { i: 'zoom', node: <g><path d="M17 28H2V1H29V19" fill="none" stroke={G} strokeWidth="2" /><circle cx="25" cy="24" r="5" fill="none" stroke="#fff" strokeWidth="2" /><path d="M28 28L33 33" stroke={T} strokeWidth="2" /></g> },
    { i: 'hand', node: <FaHandPaper x="0" y="0" size={33} color={G} /> },
    { i: 'orbit', node: <g><path d="M11 9.5C5 10.5 1 13 1 16C1 20 8 23 15 23S29 20 29 16C29 13 25 10.5 19 9.5" fill="none" stroke="#fff" strokeWidth="2.6" /><path d="M15 0V32" stroke={B} strokeWidth="2" /></g> },
  ],
  [
    { i: 'props', node: <g><path d="M2 0H24V32H2Z" fill={G} /><rect x="4" y="5" width="14" height="12" fill="#8cc4f7" stroke="#555" strokeWidth="1" /><path d="M6 22H15M6 27H15" stroke="#777" strokeWidth="2" />{pencil(16, 32, .42)}</g> },
    { i: 'quick', node: <g><path d="M0 6L14 21L8 23L12 32L8 32L4 25L0 29Z" fill="#fff" /><path d="M16 0L10 8H14L10 16L20 8H16L20 0Z" fill={Y} />{listDoc(14, 14)}</g> },
    { i: 'xref', node: <g><path d="M1 0H14L17 14H1Z" fill={G} /><circle cx="22" cy="10" r="9" fill={N} /><circle cx="11" cy="22" r="9" fill={N} /><circle cx="23" cy="23" r="8" fill={N} /><path d="M10 22H30M20 12V34" stroke="#fff" strokeWidth="2" /><rect x="15" y="17" width="10" height="10" fill={K} stroke="#fff" strokeWidth="2" /></g> },
    { i: 'match', node: <g><ellipse cx="7" cy="9" rx="6" ry="7.5" fill="#8fd3a0" /><ellipse cx="25" cy="24" rx="7" ry="8" fill="#8cc4f7" /><path d="M16 6H25V11" fill="none" stroke="#fff" strokeWidth="2" /><path d="M22 9H29L25 15Z" fill="#fff" /></g> },
    { i: 'purgeDoc', node: <g>{doc(3, 0, 27, 32)}<rect x="13" y="4" width="2" height="20" fill="#7a5b33" /><path d="M6 32L11 22H17L22 32Z" fill={Y} /></g> },
    { i: 'refs', badge: true, node: <g><circle cx="13" cy="18" r="9" fill="none" stroke="#b0b3b9" strokeWidth="2" /><rect x="12" y="20" width="18" height="14" fill="none" stroke={G} strokeWidth="2" /><path d="M18 6V18M24 6V18M15 9H27M15 14H27" stroke={B} strokeWidth="1.6" /></g> },
  ],
  [
    { i: 'compare', node: <g>{doc(1, 0, 32, 32)}<rect x="4" y="9" width="7" height="9" fill="#e33" /><rect x="4" y="21" width="7" height="7" fill="#3a3" /><rect x="22" y="14" width="7" height="6" fill="#777" /><rect x="22" y="22" width="7" height="6" fill="#777" /><path d="M15 0V33" stroke={B} strokeWidth="2.4" /></g> },
    { i: 'plane', badge: true, node: <path d="M0 20L30 2L18 32L14 24L18 12L10 23Z" fill={B} /> },
    { i: 'screen', badge: true, node: <g><rect x="7" y="9" width="27" height="24" fill={G} /><rect x="1" y="2" width="28" height="25" fill={K} stroke={B} strokeWidth="1.5" /><path d="M4 14L8 14L11 20L14 17L17 21L25 21" fill="none" stroke={B} strokeWidth="1.2" /></g> },
  ],
];

/* status bar icons (40 x 40) */
const statusIcons: { on?: boolean; node: React.ReactNode }[] = [
  { node: <path d="M11 4V36M20 4V36M29 4V36M5 12H35M5 20H35M5 28H35" stroke="#d0d0d0" strokeWidth="2" /> },
  { node: <g fill="#d0d0d0">{[8, 19, 30].flatMap((y) => [10, 20, 30].map((x) => <rect key={x + '-' + y} x={x - 2} y={y - 2} width="5" height="4" />))}</g> },
  { node: <path d="M8 4V34H38M8 26H18V34" fill="none" stroke="#d0d0d0" strokeWidth="2" /> },
  { node: <g fill="none" stroke="#d0d0d0" strokeWidth="2"><circle cx="19" cy="21" r="14" /><path d="M19 21H38M19 21L29 7" /></g> },
  { on: true, node: <g><path d="M5 13H19M12 6V20" stroke="#fff" strokeWidth="2" /><rect x="16" y="24" width="20" height="10" fill="#fff" /><rect x="16" y="24" width="5" height="10" fill="#bcd" /></g> },
  { node: <g fill="#d0d0d0"><rect x="6" y="6" width="28" height="5" /><rect x="6" y="17" width="28" height="7" /><rect x="6" y="29" width="18" height="7" /><rect x="22" y="11" width="12" height="6" fill="#3c4454" /></g> },
  { on: true, node: <g><rect x="8" y="4" width="24" height="32" fill="none" stroke="#fff" strokeWidth="2" /><rect x="11" y="7" width="18" height="26" fill="#fff" /><path d="M11 10h4v4h-4ZM19 10h4v4h-4ZM15 14h4v4h-4ZM23 14h4v4h-4ZM11 18h4v4h-4ZM19 18h4v4h-4ZM15 22h4v4h-4ZM23 22h4v4h-4ZM11 26h4v4h-4ZM19 26h4v4h-4Z" fill="#6a8ebd" /></g> },
  { on: true, node: <g fill="none" stroke="#fff" strokeWidth="2"><path d="M9 4H5V36H9M26 4H30V16" /><rect x="13" y="9" width="9" height="7" /><circle cx="18" cy="25" r="4" /><path d="M24 22L36 36L31 35L28 38Z" fill="#fff" /></g> },
  { on: true, node: <path d="M6 34H34M6 34L26 6" fill="none" stroke="#fff" strokeWidth="2.4" /> },
  { on: true, node: <g fill="none" stroke="#fff" strokeWidth="2"><rect x="5" y="4" width="9" height="9" /><path d="M14 8H32V36H8V13" /></g> },
  { on: true, node: <g fill="#fff"><path d="M14 6L20 28L27 36L14 32L2 36L9 28Z" /><circle cx="29" cy="12" r="7" /></g> },
  { node: <g fill="#d0d0d0"><path d="M15 6L20 26L28 36L15 32L3 36L10 26Z" /><path d="M27 3L22 15H26L24 24L33 11H28L31 3Z" fill="#f9d27d" /></g> },
  { node: <path d="M20 4L25 26L34 36L20 32L6 36L15 26Z" fill="#d0d0d0" /> },
];

/* ---------- layout ---------- */
const Screen = styled.div`
  width: 2880px; height: 1800px; display: flex; flex-direction: column;
  font-family: ${FONT};
  background:
    linear-gradient(#e8e7e2 0 200px, transparent 200px),
    linear-gradient(90deg, #1b150c 0, #221b0e 4%, #16130b 7%, #241f10 12%, #17160c 17%, #22200f 21%, #2a2a12 28%, #1c1c0e 33%, #2b2913 38%, #1b1c0d 45%, #262510 49%, #2d2410 56%, #191a0c 62%, #283014 67%, #1d210f 72%, #26230f 78%, #2a2611 84%, #1a1a0c 90%, #221f0e 95%, #18170c 100%);
`;
const MenuBar = styled.header`
  height: 50px; flex: none; display: flex; align-items: center; padding: 0 37px 4px 42px;
  background: linear-gradient(90deg, #edecE7, #e8e7e1); border-bottom: 2px solid #b9b8b1;
  color: #0b0b0b; font-size: 25px; letter-spacing: -0.1px;
`;
const AppName = styled.span`font-weight: 700; margin: 0 0 0 36px; font-size: 26px;`;
const MenuList = styled.nav`display: flex; gap: 43.4px; margin-left: 44px;`;
const Extras = styled.div`margin-left: auto; display: flex; align-items: center; gap: 36px;`;
const Clock = styled.span`white-space: pre; margin-left: -3px; font-size: 26px; letter-spacing: .3px;`;
const Window = styled.main`
  height: 1720px; flex: none; display: flex; flex-direction: column; overflow: hidden;
  background: ${K}; border-radius: 20px; box-shadow: inset 0 1px 0 #878c96;
`;
const TitleBar = styled.div`
  height: 56px; flex: none; display: grid; grid-template-columns: 1fr auto 1fr; align-items: center; padding-left: 15px;
`;
const Lights = styled.div`display: flex; gap: 17px;`;
const Light = styled.span<{ $c: string; $dot?: boolean }>`
  width: 24px; height: 24px; border-radius: 50%; background: ${(p) => p.$c}; display: flex; align-items: center; justify-content: center;
  &::after { content: ''; width: 9px; height: 9px; border-radius: 50%; background: ${(p) => (p.$dot ? '#7d1512' : 'transparent')}; }
`;
const Title = styled.div`color: #a2a5ac; font-size: 26.5px; font-weight: 600; white-space: pre; letter-spacing: 0;`;
const UserBox = styled.div`
  justify-self: end; align-self: start; margin-top: 2px; width: 239px; height: 42px; background: #4a5468; color: #e8e8e8;
  border-bottom: 2px solid #2b313c; border-left: 2px solid #353c4a; display: flex; align-items: center; padding-left: 10px; gap: 10px; font-size: 24px; white-space: nowrap;
`;
const UserCaret = styled.span`width: 0; height: 0; border: 6px solid transparent; border-top: 10px solid #ddd; border-bottom: 0; margin-left: 12px; flex: none;`;
const ToolBar = styled.div`
  height: 58px; flex: none; display: flex; align-items: flex-start; gap: 94px; padding: 6px 0 0 412px; border-bottom: 2px solid #252a34;
`;
const ToolGroup = styled.div`display: flex; gap: 32px;`;
const ToolBtn = styled.div`position: relative; width: 34px; height: 32px; flex: none;`;
const Dot = styled.span`
  position: absolute; width: 21px; height: 21px; border-radius: 50%; background: #e9773e; border: 2px solid #fff; left: 27px; top: -4px;
`;
const BigDot = styled(Dot)`left: 68px; top: -3px;`;
const TabDot = styled(Dot)`left: 62px; top: -2px;`;
const ToolSvg = styled.svg`width: 34px; height: 32px; overflow: visible; display: block;`;

const Work = styled.div`flex: 1; display: flex; min-height: 0;`;
const LeftDock = styled.aside`width: 368px; flex: none; display: flex; flex-direction: column;`;
const DockTabs = styled.div`height: 44px; flex: none; display: flex; color: #a4a7ad; font-size: 23px;`;
const DockTab = styled.div<{ $on?: boolean; $w: number }>`
  width: ${(p) => p.$w}px; flex: none; display: flex; align-items: center; justify-content: center; position: relative;
  background: ${(p) => (p.$on ? K : '#2e333f')}; color: ${(p) => (p.$on ? '#efefef' : '#a4a7ad')};
  border-right: 2px solid #2a2f39; border-bottom: ${(p) => (p.$on ? '0' : '2px solid #252a34')};
`;
const Collapse = styled.div`flex: 1; display: flex; align-items: center; justify-content: center; color: #9a9ea6; border-right: 2px solid #2a2f39;`;
const Section = styled.section<{ $pad: number }>`
  padding: 0 8px ${(p) => p.$pad}px; flex: none; position: relative;
  &::after { content: ''; display: block; height: 2px; background: #262b35; position: absolute; left: 8px; right: 8px; bottom: -2px; }
  margin-bottom: 2px;
`;
const SectionHead = styled.div`
  height: 44px; display: flex; align-items: center; color: #e8e8e8; font-size: 20px; letter-spacing: -0.35px;
  & > svg:last-child { margin-left: auto; margin-right: 3px; color: #efefef; }
`;
const Arrow = styled.span`width: 0; height: 0; border: 8.5px solid transparent; border-top: 9px solid #f2f2f2; border-bottom: 0; margin: 2px 9px 0 1px;`;
const ToolGrid = styled.div`display: grid; grid-template-columns: repeat(8, 44px); grid-auto-rows: 44px;`;
const Cell = styled.div<{ $c: number; $r: number; $big?: boolean }>`
  position: relative;
  grid-column: ${(p) => p.$c + 1} / span ${(p) => (p.$big ? 2 : 1)};
  grid-row: ${(p) => p.$r + 1} / span ${(p) => (p.$big ? 2 : 1)};
`;
const CellSvg = styled.svg`width: 100%; height: 100%; display: block; overflow: visible;`;
const Fly = styled.span`
  position: absolute; right: 1px; bottom: 2px; width: 0; height: 0; border-style: solid; border-width: 0 0 8px 8px; border-color: transparent transparent #8b8f97 transparent;
`;
const DockFoot = styled.div`margin-top: auto; height: 42px; flex: none; display: flex; align-items: center; gap: 36px; padding: 0 0 6px 31px;`;

const RightArea = styled.div`flex: 1; min-width: 0; display: flex; flex-direction: column;`;
const TopArea = styled.div`flex: 1; min-height: 0; display: flex;`;
const CenterCol = styled.div`width: 2003px; flex: none; display: flex; flex-direction: column;`;
const DocTabs = styled.div`height: 44px; flex: none; display: flex;`;
const DocBtn = styled.div`width: 48px; flex: none; display: flex; align-items: center; justify-content: center; border-right: 2px solid #2a2f39; color: #ddd;`;
const DocTab = styled.div`
  width: 258px; flex: none; background: #4b586d; color: #efefef; font-size: 21px; font-weight: 500; display: flex; align-items: center; padding: 0 0 6px 6px; border-right: 2px solid #2a2f39;
`;
const Viewport = styled.div`flex: 1; position: relative; background: #212831; overflow: hidden;`;
const Drawing = styled.svg`position: absolute; inset: 0; width: 100%; height: 100%; display: block;`;
const ViewLabel = styled.div`
  position: absolute; left: 32px; top: 8px; height: 36px; display: flex; align-items: center; color: #a9abad; font-size: 22px; font-weight: 500; letter-spacing: .75px;
`;
const ViewItem = styled.span<{ $bar?: boolean }>`
  padding: 0 13px; ${(p) => (p.$bar ? 'border-left: 2px solid #8a8d93;' : '')} line-height: 26px; white-space: nowrap;
  &:first-child { padding: 0 20px 0 0; font-weight: 300; font-size: 24px; }
`;
const WcsPill = styled.div`
  position: absolute; left: 1790px; top: 342px; width: 99px; height: 24px; border-radius: 8px; background: #6a7079; color: #22272f;
  display: flex; align-items: center; font-size: 20px; padding-left: 8px; letter-spacing: -0.5px; font-family: "Liberation Sans", sans-serif;
  &::after { content: ''; margin-left: 17px; width: 0; height: 0; border: 9px solid transparent; border-top: 10px solid #9fb0b6; border-bottom: 0; }
`;
const CmdWrap = styled.div`position: absolute; left: 502px; bottom: 0; width: 1000px; display: flex; flex-direction: column; align-items: flex-end;`;
const CmdHistory = styled.div`
  width: 920px; height: 185px; background: ${K}; padding: 5px 0 0 11px; color: #c4c6ca; font-family: "Noto Sans", sans-serif; font-size: 20px; line-height: 30px; position: relative; white-space: pre; letter-spacing: 0;
`;
const CmdScroll = styled.span`position: absolute; right: 8px; top: 141px; width: 8px; height: 40px; border-radius: 4px; background: #8a8f98;`;
const CmdInput = styled.div`
  width: 100%; height: 50px; background: ${K}; display: flex; align-items: center; position: relative; color: #9da0a6; padding-left: 18px;
`;
const Prompt = styled.span`font-family: "Noto Sans", sans-serif; font-size: 20px; color: #c8c8c8; width: 40px; letter-spacing: 1px; display: flex; align-items: center;`;
const MiniCaret = styled.span`display: inline-block; width: 0; height: 0; border: 6px solid transparent; border-top: 9px solid #a8a8a8; border-bottom: 0; margin-left: 5px;`;
const CmdText = styled.span`font-family: "Noto Sans", sans-serif; font-style: italic; font-size: 22.5px; margin-left: 33px;`;
const CmdRight = styled.div`margin-left: auto; display: flex; align-items: center; gap: 26px; padding-right: 20px;`;

const RightDock = styled.aside`flex: 1; min-width: 0; display: flex; flex-direction: column; border-left: 2px solid #2f3541;`;
const RTabs = styled.div`height: 44px; flex: none; display: flex;`;
const RTab = styled.div<{ $on?: boolean; $w: number }>`
  width: ${(p) => p.$w}px; flex: none; position: relative; display: flex; align-items: center; justify-content: center;
  background: ${(p) => (p.$on ? K : '#2e333f')}; border-right: 2px solid #252a34; border-bottom: ${(p) => (p.$on ? '0' : '2px solid #252a34')};
`;
const RCollapse = styled.div`flex: 1; display: flex; align-items: center; justify-content: center; color: #9a9ea6; border-bottom: 2px solid #252a34;`;
const PropHead = styled.div`height: 36px; flex: none; display: flex; align-items: center; padding: 0 19px 0 19px; color: #e8e8e8; font-size: 24px; letter-spacing: -0.2px;`;
const Segs = styled.div`margin-left: auto; height: 28px; width: 120px; display: flex; border: 2px solid #2a2f39; border-radius: 3px; overflow: hidden; font-size: 16px; margin-right: 20px;`;
const Seg = styled.span<{ $on?: boolean }>`
  flex: 1; display: flex; align-items: center; justify-content: center;
  background: ${(p) => (p.$on ? '#4a5a75' : '#3b4250')}; color: ${(p) => (p.$on ? '#eee' : '#7f838b')}; font-weight: 500;
  & + & { border-left: 2px solid #2a2f39; }
`;
const HeadIcons = styled.div`display: flex; gap: 22px; align-items: center;`;
const ObjectSelect = styled.div`
  margin: 13px 19px 0 19px; height: 42px; flex: none; background: #454e60; border-radius: 4px; display: flex; align-items: center; padding: 0 10px 0 14px; color: #888e9a; font-size: 22px;
`;
const PropScroll = styled.div`
  flex: 1; min-height: 0; margin: 8px 0 16px; position: relative; overflow: hidden; padding-right: 45px;
`;
const ScrollThumb = styled.span`position: absolute; left: 478px; top: 5px; width: 10px; height: 853px; border-radius: 5px; background: #878c97;`;
const GroupHead = styled.div`height: 62px; display: flex; align-items: center; color: #d8d8d8; font-size: 22px; font-weight: 700; letter-spacing: -0.1px; padding-left: 27px;`;
const Chevron = styled.span`
  width: 11px; height: 11px; border-right: 3px solid #22272f; border-bottom: 3px solid #22272f; transform: rotate(45deg) translate(-2px,-2px); margin: 0 28px 0 0;
`;
const Row = styled.div`height: 46px; display: flex; align-items: center;`;
const Label = styled.div<{ $gap?: number }>`
  width: 277px; flex: none; text-align: right; padding-right: ${(p) => p.$gap ?? 19}px; color: #bfc0c2; font-size: 22px; white-space: nowrap; letter-spacing: .1px;
`;
const Field = styled.div<{ $w?: number; $off?: boolean }>`
  width: ${(p) => p.$w ?? 185}px; height: 36px; flex: none; display: flex; align-items: center; padding: 0 9px 0 11px;
  background: ${(p) => (p.$off ? '#454e60' : '#4c5669')}; border: 2px solid ${(p) => (p.$off ? '#454e60' : '#2c3a40')}; border-radius: 5px;
  color: ${(p) => (p.$off ? '#838995' : '#f1f1f1')}; font-size: 22px; white-space: nowrap; overflow: hidden; letter-spacing: .1px;
`;
const InputField = styled(Field)`padding-left: 5px;`;
const Caret = styled.span`margin-left: auto; flex: none; width: 0; height: 0; border: 6px solid transparent; border-top: 9px solid #d4d4d4; border-bottom: 0;`;
const Swatch = styled.span`width: 18px; height: 18px; background: #fff; border: 2px solid #000; margin: 0 23px 0 5px; flex: none;`;
const LineSample = styled.span`width: 64px; height: 2px; background: #f1f1f1; flex: none; margin: 0 29px 0 4px;`;
const Slider = styled(Field)`width: 95px; margin: 0 8px 0 6px; justify-content: flex-end; position: relative;
  &::before { content: ''; position: absolute; left: -1px; top: 2px; bottom: 2px; width: 2px; border-top: 5px solid #5b8fe0; border-bottom: 5px solid #5b8fe0; }
  &::after { content: ''; position: absolute; left: 42px; bottom: 3px; height: 11px; width: 1px; background: #8c93a0; }
`;
const IconBox = styled(Field)`width: 39px; margin-left: 6px; padding: 0; background: #3c4454;`;
const CheckBox = styled.span`
  width: 20px; height: 20px; background: #5b8bc5; border-radius: 3px; margin: 0 12px 0 7px; display: flex; align-items: center; justify-content: center; flex: none;
`;
const CheckText = styled.span`color: #f1f1f1; font-size: 22px; white-space: nowrap;`;

const StatusBar = styled.footer`
  height: 48px; flex: none; display: flex; align-items: center; background: ${K}; border-top: 2px solid #2a2f39; color: #bfc1c4;
`;
const LayoutTab = styled.div<{ $on?: boolean; $w: number }>`
  width: ${(p) => p.$w}px; flex: none; height: 100%; display: flex; align-items: center; justify-content: center; font-size: 21px; padding-bottom: 2px;
  background: ${(p) => (p.$on ? '#323946' : 'transparent')}; color: ${(p) => (p.$on ? '#f1f1f1' : '#b3b5b8')}; font-weight: ${(p) => (p.$on ? 600 : 400)};
  margin-left: ${(p) => (p.$on ? '3px' : '0')};
`;
const StatusRight = styled.div`margin-left: auto; width: 1020px; height: 100%; flex: none; border-left: 2px solid #2a2f39; display: flex; align-items: center; padding-left: 14px;`;
const Coords = styled.span`width: 284px; flex: none; font-size: 23px; color: #b6b8bb; white-space: nowrap; letter-spacing: -0.25px; padding-bottom: 2px;`;
const StatusIcons = styled.div`display: flex; gap: 4px; align-items: center;`;
const StatusBtn = styled.div<{ $on?: boolean }>`width: 40px; height: 40px; flex: none; background: ${(p) => (p.$on ? '#6a8ebd' : 'transparent')};`;
const Scale = styled.div`width: 56px; flex: none; display: flex; align-items: center; justify-content: space-between; font-size: 22px; color: #b6b8bb; padding: 0 12px 0 1px; letter-spacing: -0.5px;`;
const StatusEnd = styled.div`margin-left: 4px; display: flex; gap: 4px; align-items: center;`;

/* ---------- drawing ---------- */
const SPHERE = 'M-51 5L-46-12L-36-28L-18-40L5-43L26-38L40-24L47-8L51 7L44 21L28 35L0 44L-28 38L-44 24Z';
const RIM = 'M-51 5L-46-12L-36-28L-18-40L5-43L26-38L40-24L47-8L51 7';
const spheres = [[1382, 622], [1490, 674], [1597, 726], [1244, 783], [1352, 835], [1459, 886]];
const fam1 = [351, 464, 577.6, 691, 804];
const fam2 = [1591, 1742, 1894, 2045, 2197];

const Scene = () => (
  <Drawing viewBox="368 208 2003 1514">
    <defs>
      <radialGradient id="ball" cx=".3" cy=".28" r=".8">
        <stop offset="0" stopColor="#fdfde0" />
        <stop offset=".5" stopColor="#d9d9d0" />
        <stop offset=".85" stopColor="#9c9dc8" />
        <stop offset="1" stopColor="#6466ba" />
      </radialGradient>
      <linearGradient id="cubeF" x1="0" y1="0" x2="0" y2="1"><stop offset="0" stopColor="#a4a6aa" /><stop offset="1" stopColor="#94979c" /></linearGradient>
      <radialGradient id="glow" cx=".5" cy=".5" r=".5"><stop offset="0" stopColor="#5a5f67" /><stop offset=".7" stopColor="#2a3039" /><stop offset="1" stopColor="#212831" stopOpacity="0" /></radialGradient>
    </defs>
    <polygon points="1343.5,495.5 1775,703 1497.7,1025 1067,817.5" fill="#eae9d8" />
    <polygon points="1067,817.5 1497.7,1025 1497.7,1363 1067,1157" fill="#b3b4c9" />
    <polygon points="1497.7,1025 1775,703 1775,1043.7 1497.7,1363" fill="#585bb5" />
    <g stroke="#f4f4f4" strokeWidth="1.2" opacity=".9">
      {fam1.map((y) => <line key={y} x1="368" y1={y + 0.48 * (368 - 1040)} x2="2371" y2={y + 0.48 * (2371 - 1040)} />)}
      {fam2.map((x) => <line key={x} x1={x + 2 / 1.165} y1="208" x2={x - 1512 / 1.165} y2="1722" />)}
    </g>
    <g fill="none" stroke="#fff" strokeWidth="4" strokeLinejoin="round">
      <path d="M1067 817.5L1343.5 495.5L1775 703V1043.7L1497.7 1363L1067 1157Z" />
      <path d="M1497.7 1025V1363" strokeWidth="1.6" />
    </g>
    {spheres.map(([x, y]) => (
      <g key={x} transform={`translate(${x} ${y})`}>
        <path d={SPHERE} fill="url(#ball)" />
        <path d={RIM} fill="none" stroke="#fff" strokeWidth="4" />
      </g>
    ))}
    {/* UCS icon */}
    <path d="M1072 1150L1120 1096" stroke="#4f8a46" strokeWidth="9" strokeLinecap="round" />
    <path d="M1072 1161L1149 1196" stroke="#a8655f" strokeWidth="9" strokeLinecap="round" />
    <path d="M1074 1160L1149 1194" stroke="#e0b4aa" strokeWidth="2.4" />
    <rect x="1063" y="1090" width="12" height="70" rx="4" fill="#2f5a8c" />
    <ellipse cx="1069" cy="1091" rx="6" ry="4" fill="#6e9fd2" />
    <g fontFamily="Liberation Sans" fontSize="34" fill="none" strokeWidth=".7">
      <text x="1066" y="1083" stroke="#3b7fe0">Z</text>
      <text x="1116" y="1084" stroke="#4fa04a">Y</text>
      <text x="1145" y="1187" stroke="#d0413c">X</text>
    </g>
    {/* crosshair */}
    <path d="M731 428L815 327" stroke="#3f8a3c" strokeWidth="1.4" />
    <path d="M716 367L849 434" stroke="#a53a33" strokeWidth="1.4" />
    <path d="M757 323V425" stroke="#3560b5" strokeWidth="1.4" />
    <rect x="752" y="386" width="11" height="11" fill="none" stroke="#fff" strokeWidth="1.6" />
    {/* view cube */}
    <ellipse cx="2208" cy="420" rx="111" ry="84" fill="none" stroke="#484e57" strokeWidth="30" />
    <ellipse cx="2208" cy="420" rx="126" ry="98" fill="none" stroke="#565b63" strokeWidth="1.5" />
    <ellipse cx="2208" cy="420" rx="96" ry="70" fill="none" stroke="#3b4049" strokeWidth="1.5" />
    <ellipse cx="2215" cy="425" rx="90" ry="60" fill="url(#glow)" />
    <polygon points="2194,292 2277,328 2224,391 2138,350" fill="#a8abb0" stroke="#8d9096" strokeWidth="1" />
    <polygon points="2138,350 2224,391 2222,453 2145,413" fill="url(#cubeF)" stroke="#8d9096" strokeWidth="1" />
    <polygon points="2224,391 2277,328 2270,385 2222,453" fill="#9fa2a7" stroke="#8d9096" strokeWidth="1" />
    <polygon points="2218,372 2234,386 2224,402 2207,392 2209,381" fill="#b9bdc5" opacity=".85" />
    <g fontFamily="Noto Sans" fontWeight="700" fill="#5c6169">
      <text transform="translate(2185 335) rotate(23) skewX(-20)" fontSize="21" letterSpacing="1">TOP</text>
      <text transform="translate(2153 393) rotate(25) skewY(2)" fontSize="19" letterSpacing="1">FRONT</text>
      <text transform="translate(2238 419) rotate(-55)" fontSize="17">RIGHT</text>
    </g>
    <g fontFamily="Noto Sans" fontWeight="700" fill="#a8abb0">
      <text transform="translate(2096 378) rotate(-22) scale(1.2 .85)" fontSize="36">W</text>
      <text transform="translate(2124 505) rotate(26)" fontSize="52">S</text>
      <text transform="translate(2298 484) rotate(-27) skewX(-20)" fontSize="46">E</text>
    </g>
  </Drawing>
);

/* ---------- right panel data ---------- */
type P = { h?: string; l?: string; v?: string; k?: string; gap?: number };
const props: P[] = [
  { h: 'General' },
  { l: 'Color', v: 'ByLayer', k: 'color' }, { l: 'Layer', v: 'dado' }, { l: 'Linetype', v: 'By...', k: 'line' },
  { l: 'Linetype scale', v: '1.0000', k: 'input' }, { l: 'Lineweight', v: 'ByLayer' }, { l: 'Transparency', k: 'trans' },
  { h: 'Annotation' },
  { l: 'Text style', v: 'Standard' }, { l: 'Dimension style', v: 'Standard' }, { l: 'Detail View style', v: 'Imperial24' },
  { l: 'Multileader style', v: 'Standard' }, { l: 'Section View st...', v: 'Imperial24', gap: 15 }, { l: 'Table style', v: 'Standard' },
  { l: 'Annotation scale', v: '1:1', gap: 19 }, { l: 'Text height', k: 'height', v: '0.2000' },
  { h: 'Plot Style' },
  { l: 'Plot style', v: 'ByColor' }, { l: 'Plot style table', v: 'None' }, { l: 'Plot style attach...', v: 'Model', k: 'off', gap: 7 },
  { l: 'Plot table type', v: 'Not available', k: 'off' },
  { h: 'UCS' },
  { l: 'UCS Name', v: '', k: 'off' }, { k: 'check', v: 'UCS per vie...' },
  { h: '3D Visualization' },
  { l: 'Material', v: 'ByLayer' }, { l: 'Shadow Display', v: 'Casts and R...' },
  { h: 'Visual Style' },
  { l: 'Visual style', v: 'Conceptual' },
];

const PropRow = ({ p }: { p: P }) => {
  if (p.h) return <GroupHead><Chevron />{p.h}</GroupHead>;
  let field: React.ReactNode;
  if (p.k === 'color') field = <Field><Swatch />{p.v}<Caret /></Field>;
  else if (p.k === 'line') field = <Field><LineSample />{p.v}<Caret /></Field>;
  else if (p.k === 'input') field = <InputField>{p.v}</InputField>;
  else if (p.k === 'off') field = <InputField $off>{p.v}</InputField>;
  else if (p.k === 'trans') field = (
    <>
      <Slider>0</Slider>
      <Field $w={78}>
        <svg width="26" height="24" viewBox="0 0 26 24"><path d="M6 3H24L18 12H1Z" fill="#8cc4f7" /><path d="M1 14H18L24 7M1 18H18L24 11M1 22H18L24 15" fill="none" stroke="#d0d0d0" strokeWidth="2" /></svg>
        <Caret />
      </Field>
    </>
  );
  else if (p.k === 'height') field = (
    <>
      <InputField $w={140}>{p.v}</InputField>
      <IconBox>
        <svg width="36" height="32" viewBox="0 0 36 32"><path d="M3 3V30M33 3V13" stroke="#d0d0d0" strokeWidth="2" /><path d="M8 7H28" stroke={B} strokeWidth="2" /><path d="M6 7l5-3v6ZM30 7l-5-3v6Z" fill={B} /><path d="M25 14V32M16 23H34" stroke="#d0d0d0" strokeWidth="2" /><rect x="21" y="19" width="8" height="8" fill="none" stroke="#d0d0d0" strokeWidth="2" /></svg>
      </IconBox>
    </>
  );
  else if (p.k === 'check') return (
    <Row>
      <Label />
      <CheckBox><svg width="14" height="14" viewBox="0 0 14 14"><path d="M2 7L6 11L12 2" fill="none" stroke="#fff" strokeWidth="2" /></svg></CheckBox>
      <CheckText>{p.v}</CheckText>
    </Row>
  );
  else field = <Field>{p.v}<Caret /></Field>;
  return <Row><Label $gap={p.gap}>{p.l}</Label>{field}</Row>;
};

const Chevrons = ({ dir }: { dir: 'l' | 'r' }) => (
  <svg width="16" height="18" viewBox="0 0 16 18"><path d={dir === 'l' ? 'M8 3L2 9L8 15M14 3L8 9L14 15' : 'M2 3L8 9L2 15M8 3L14 9L8 15'} fill="none" stroke="currentColor" strokeWidth="1.5" /></svg>
);

const history = [
  'Edges/shades of Gray/SKetchy/X-ray/Other] <Realistic>: _h',
  'Command: *Cancel*',
  'Command: *Cancel*',
  'Command: _vscurrent',
  'Enter an option [2dwireframe/Wireframe/Hidden/Realistic/Conceptual/Shaded/shaded with',
  'Edges/shades of Gray/SKetchy/X-ray/Other] <Hidden>: _c',
];
const menus = ['File', 'Edit', 'View', 'Insert', 'Format', 'Tools', 'Draw', 'Dimension', 'Modify', 'Window', 'Help'];

export default function App() {
  return (
    <Screen>
      <Global />
      <MenuBar>
        <FaApple size={30} />
        <AppName>AutoCAD 2023</AppName>
        <MenuList>{menus.map((m) => <span key={m}>{m}</span>)}</MenuList>
        <Extras>
          <svg width="44" height="34" viewBox="0 0 44 34">
            <g fill="none" stroke="#111" strokeWidth="3.4"><circle cx="13" cy="18" r="9" /><circle cx="24" cy="13" r="10" /><path d="M14 20L24 9L30 26" /></g>
            <path d="M34 12L44 32H24Z" fill="#ef5f25" /><path d="M34 18V26M34 28V30" stroke="#fff" strokeWidth="2.4" />
          </svg>
          <FaBluetoothB size={28} />
          <svg width="52" height="24" viewBox="0 0 52 24">
            <rect x="1" y="1" width="44" height="22" rx="6" fill="none" stroke="#777" strokeWidth="2" />
            <rect x="4" y="4" width="30" height="16" rx="3" fill="#111" />
            <path d="M47 8a4 4 0 0 1 0 8Z" fill="#999" />
            <path d="M27 3L17 13H24L19 21L31 10H24L29 3Z" fill="#eee" stroke="#111" strokeWidth="1" />
          </svg>
          <FaWifi size={32} />
          <FiSearch size={30} strokeWidth={2.6} />
          <svg width="28" height="30" viewBox="0 0 28 30"><rect x="1" y="1" width="26" height="13" rx="6.5" fill="none" stroke="#111" strokeWidth="2.4" /><circle cx="8" cy="7.5" r="4" fill="#111" /><rect x="0" y="16" width="28" height="14" rx="7" fill="#111" /><circle cx="20" cy="23" r="4.4" fill="#eee" /></svg>
          <svg width="28" height="30" viewBox="0 0 28 30">
            <defs><radialGradient id="siri" cx=".5" cy=".5" r=".6"><stop offset="0" stopColor="#ddd" /><stop offset=".35" stopColor="#4a78b8" /><stop offset=".65" stopColor="#b14a86" /><stop offset="1" stopColor="#4ac0c8" /></radialGradient></defs>
            <ellipse cx="14" cy="15" rx="13.5" ry="15" fill="url(#siri)" />
          </svg>
          <Clock>Tue 22 Oct  10:24</Clock>
        </Extras>
      </MenuBar>
      <Window>
        <TitleBar>
          <Lights><Light $c="#ee6a5f" $dot /><Light $c="#f5bf4f" /><Light $c="#61c554" /></Lights>
          <Title>Autodesk AutoCAD 2023    Drawing1.dwg</Title>
          <UserBox>
            <svg width="26" height="32" viewBox="0 0 26 32"><circle cx="13" cy="9" r="6.5" fill="none" stroke="#ddd" strokeWidth="1.6" /><path d="M1 31C1 21 6 17 13 17S25 21 25 31" fill="none" stroke="#ddd" strokeWidth="1.6" /></svg>
            Vitor Mendes
            <UserCaret />
          </UserBox>
        </TitleBar>
        <ToolBar>
          {toolbar.map((g, n) => (
            <ToolGroup key={n}>
              {g.map((x) => (
                <ToolBtn key={x.i}>
                  <ToolSvg viewBox="0 0 34 32">{x.node}</ToolSvg>
                  {x.badge && <Dot />}
                </ToolBtn>
              ))}
            </ToolGroup>
          ))}
        </ToolBar>
        <Work>
          <LeftDock>
            <DockTabs>
              <DockTab $on $w={160}>Drafting</DockTab>
              <DockTab $w={162}>Modeling</DockTab>
              <Collapse><Chevrons dir="l" /></Collapse>
            </DockTabs>
            {sections.map((s) => (
              <Section key={s.title} $pad={s.pad}>
                <SectionHead><Arrow />{s.title}<FaCog size={18} /></SectionHead>
                <ToolGrid>
                  {s.tools.map((x) => (
                    <Cell key={x.i + x.c + x.r} $c={x.c} $r={x.r} $big={x.big}>
                      <CellSvg viewBox={x.big ? '0 0 88 88' : '0 0 44 44'}>{panelIcons[x.i]}</CellSvg>
                      {x.fly && <Fly />}
                      {x.badge && <BigDot />}
                    </Cell>
                  ))}
                </ToolGrid>
              </Section>
            ))}
            <DockFoot>
              <svg width="24" height="24" viewBox="0 0 24 24"><path d="M12 1V23M1 12H23" stroke="#d8d8d8" strokeWidth="1.6" /></svg>
              <svg width="28" height="24" viewBox="0 0 28 24"><path d="M6 2H27M6 8H27M0 13H20M6 22H27" stroke="#d8d8d8" strokeWidth="2" /><path d="M0 13H18V17H0Z" fill="#d8d8d8" /><path d="M20 16L24 10L28 16Z" fill="#d8d8d8" /></svg>
            </DockFoot>
          </LeftDock>
          <RightArea>
            <TopArea>
              <CenterCol>
                <DocTabs>
                  <DocBtn>
                    <svg width="28" height="28" viewBox="0 0 28 28"><rect x="0" y="0" width="14" height="16" fill="#8cc4f7" /><rect x="15" y="2" width="12" height="12" fill="#d0d0d0" /><rect x="2" y="16" width="11" height="12" fill="#d0d0d0" /><rect x="15" y="16" width="12" height="12" fill="#d0d0d0" /></svg>
                  </DocBtn>
                  <DocBtn><svg width="24" height="24" viewBox="0 0 24 24"><path d="M12 1V23M1 12H23" stroke="#d8d8d8" strokeWidth="1.6" /></svg></DocBtn>
                  <DocTab>Drawing1*</DocTab>
                </DocTabs>
                <Viewport>
                  <Scene />
                  <ViewLabel>
                    <ViewItem>+</ViewItem>
                    <ViewItem $bar>Custom View</ViewItem>
                    <ViewItem $bar>Conceptual</ViewItem>
                  </ViewLabel>
                  <WcsPill>WCS</WcsPill>
                  <CmdWrap>
                    <CmdHistory>
                      {history.map((h, n) => <div key={n}>{h}</div>)}
                      <CmdScroll />
                    </CmdHistory>
                    <CmdInput>
                      <Prompt>&gt;_<MiniCaret /></Prompt>
                      <CmdText>Type a command</CmdText>
                      <CmdRight>
                        <MiniCaret />
                        <svg width="26" height="26" viewBox="0 0 26 26"><path d="M8 8H2V25H24V8H18" fill="none" stroke="#d0d0d0" strokeWidth="2.4" /><path d="M8 8V25M18 8V25" stroke="#d0d0d0" strokeWidth="1.2" /><path d="M13 2V18" stroke={B} strokeWidth="2" /><path d="M13 0L17 7H9Z" fill={B} /></svg>
                      </CmdRight>
                    </CmdInput>
                  </CmdWrap>
                </Viewport>
              </CenterCol>
              <RightDock>
                <RTabs>
                  <RTab $on $w={104}>
                    <svg width="34" height="30" viewBox="0 0 34 30"><path d="M7 7L14 1H28L22 7ZM4 11H22L19 15H1ZM1 19H17L17 23H3ZM4 25H16L18 27H1Z" fill={G} /><circle cx="25" cy="22" r="7.5" fill={G} /><rect x="24" y="20" width="2.4" height="7" fill={K} /><rect x="24" y="16.5" width="2.4" height="2.4" fill={K} /></svg>
                  </RTab>
                  <RTab $w={105}>
                    <svg width="32" height="32" viewBox="0 0 34 32">{doc(1, 6, 32, 26)}<rect x="1" y="1" width="9" height="18" rx="4.5" fill="#2e333f" stroke={G} strokeWidth="2" /><rect x="4" y="6" width="3" height="8" rx="1.5" fill="none" stroke={G} strokeWidth="1.5" /></svg>
                  </RTab>
                  <RTab $w={106}>
                    <svg width="28" height="28" viewBox="0 0 28 28"><rect x="0" y="0" width="28" height="26" fill={G} /><rect x="0" y="4" width="9" height="2" fill="#555" /><path d="M4 9h6v5H4ZM12 9h5v5h-5ZM19 9h5v5h-5ZM4 16h6v5H4ZM12 16h5v5h-5ZM19 16h5v5h-5Z" fill="#444" /></svg>
                    <TabDot />
                  </RTab>
                  <RTab $w={146} />
                  <RCollapse><Chevrons dir="r" /></RCollapse>
                </RTabs>
                <PropHead>
                  Properties
                  <Segs><Seg $on>All</Seg><Seg>My</Seg></Segs>
                  <HeadIcons>
                    <svg width="28" height="28" viewBox="0 0 28 28"><path d="M20 14V2H2V25H10" fill="none" stroke="#8b8f97" strokeWidth="2" /><path d="M6 8H17M6 13H17M6 18H13" stroke="#8b8f97" strokeWidth="2" /><path d="M13 27L15 20L23 12L28 17L20 25Z" fill="#8b8f97" /></svg>
                    <svg width="24" height="28" viewBox="0 0 24 28"><path d="M9 8V2H23V26H9V20" fill="none" stroke="#eee" strokeWidth="2" /><path d="M0 14L6 9V12H12V16H6V19Z" fill="#eee" /></svg>
                  </HeadIcons>
                </PropHead>
                <ObjectSelect>Model Space<Caret /></ObjectSelect>
                <PropScroll>
                  <ScrollThumb />
                  {props.map((p, n) => <PropRow key={n} p={p} />)}
                </PropScroll>
              </RightDock>
            </TopArea>
            <StatusBar>
              <LayoutTab $on $w={110}>Model</LayoutTab>
              <LayoutTab $w={58}><svg width="20" height="20" viewBox="0 0 20 20"><path d="M10 1V19M1 10H19" stroke="#d0d0d0" strokeWidth="1.6" /></svg></LayoutTab>
              <LayoutTab $w={104}>Layout1</LayoutTab>
              <LayoutTab $w={132}>Layout2</LayoutTab>
              <StatusRight>
                <Coords>-15.8914, 13.4533, 0.0000</Coords>
                <StatusIcons>
                  {statusIcons.map((s, n) => (
                    <StatusBtn key={n} $on={s.on}><svg width="40" height="40" viewBox="0 0 40 40">{s.node}</svg></StatusBtn>
                  ))}
                </StatusIcons>
                <Scale>1:1<MiniCaret /></Scale>
                <StatusEnd>
                  <StatusBtn><svg width="40" height="40" viewBox="0 0 40 40"><g fill="none" stroke="#d0d0d0" strokeWidth="2"><rect x="6" y="4" width="12" height="14" /><circle cx="28" cy="18" r="6" /><path d="M13 24L21 36H6Z" /></g></svg></StatusBtn>
                  <StatusBtn><FaCog size={36} color="#d8d8d8" /></StatusBtn>
                </StatusEnd>
              </StatusRight>
            </StatusBar>
          </RightArea>
        </Work>
      </Window>
    </Screen>
  );
}
